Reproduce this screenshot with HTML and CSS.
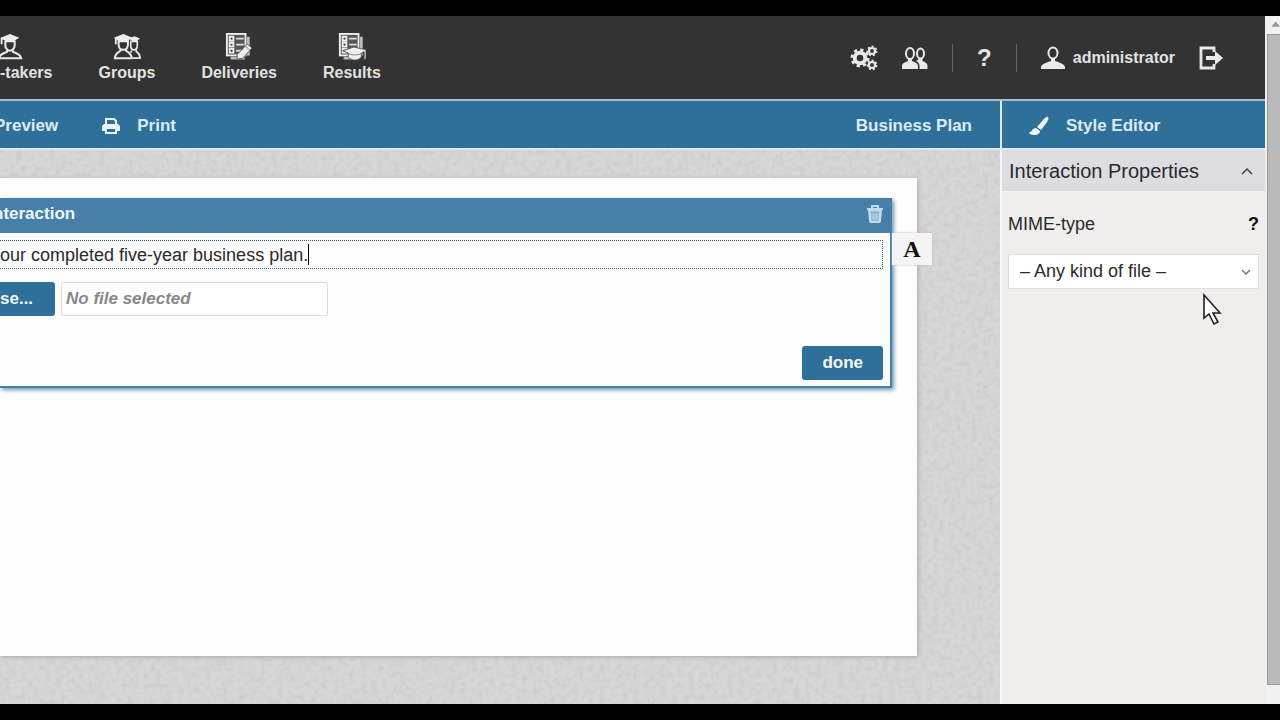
FILE: index.html
```html
<!DOCTYPE html>
<html lang="en">
<head>
<meta charset="utf-8">
<title>Business Plan</title>
<link rel="stylesheet" href="styles.css">
</head>
<body>
<div class="window">
  <div class="app">
    <header class="header">
      <nav class="nav">
        <a class="nav-item nav-item-edge" href="#">
          <svg class="nav-icon" viewBox="0 0 30 30"><use href="#graduate"/></svg>
          <span>-takers</span>
        </a>
        <a class="nav-item" href="#">
          <svg class="nav-icon" viewBox="0 0 30 30"><g fill="none" stroke="#e8e8e8" stroke-width="1.800"><path d="M19 8v5c0 3 1.500 5 3.500 5s3.500-2 3.500-5V8"/><path d="M20 19l-1 2M25 18v2c2 1.500 4 2 4 7h-8"/></g><path d="M17 6l6-2.500L29 6l-3 2v2h-6V8z" fill="#eee"/><g fill="none" stroke="#e8e8e8" stroke-width="2.200"><path d="M6 7v5c0 3.500 2 6 5 6s5-2.500 5-6V7M8 17v2c-3 2-6 3-6 8h18c0-5-3-6-6-8v-2"/></g><path d="M1 5l10-4 10 4-5 3v2H6V8l-2-1v5H2V6z" fill="#eee"/></svg>
          <span>Groups</span>
        </a>
        <a class="nav-item" href="#">
          <svg class="nav-icon" viewBox="0 0 30 30"><use href="#checklist"/><path d="M13 23L24 12l5 4-10 11-6 1z" fill="#eee" stroke="#555" stroke-width="1"/><path d="M22 14l4 4" stroke="#777"/></svg>
          <span>Deliveries</span>
        </a>
        <a class="nav-item" href="#">
          <svg class="nav-icon" viewBox="0 0 30 30"><use href="#checklist"/><path d="M5 19l12-4 13 3v10h-2v-8l-3 1.500V26c-4 4-10 4-14 0v-4.500z" fill="#eee" stroke="#555" stroke-width="1"/><path d="M11 22c4 2 10 2 14 0" fill="none" stroke="#777"/></svg>
          <span>Results</span>
        </a>
      </nav>
      <div class="tools">
        <a class="tool" href="#" aria-label="Settings"><svg width="28" height="26" viewBox="0 0 28 26" fill="none" stroke="#e8e8e8"><circle cx="10" cy="13" r="5.300" stroke-width="4"/><circle cx="10" cy="13" r="8.200" stroke-width="2.600" stroke-dasharray="3.220 3.220"/><circle cx="22" cy="6" r="3" stroke-width="2.200"/><circle cx="22" cy="6" r="4.600" stroke-width="1.600" stroke-dasharray="2.065 2.065"/><circle cx="22" cy="20" r="3" stroke-width="2.200"/><circle cx="22" cy="20" r="4.600" stroke-width="1.600" stroke-dasharray="2.065 2.065"/></svg></a>
        <a class="tool" href="#" aria-label="Users"><svg width="26" height="24" viewBox="0 0 26 24"><g fill="none" stroke="#e8e8e8" stroke-width="2"><ellipse cx="8" cy="7.500" rx="4" ry="5.500"/><ellipse cx="18.500" cy="7.500" rx="3.500" ry="5"/></g><path d="M6 12h4v3c3 1.500 6 2 6 5v3H0v-3c0-3 3-3.500 6-5zM16.500 12h4v3c3 1.500 5 2 5 5v3h-8v-3c0-3-2-4-3.500-5 1.500-.5 2.500-1 2.500-3z" fill="#eaeaea"/></svg></a>
        <span class="rule"></span>
        <a class="tool help" href="#">?</a>
        <span class="rule"></span>
        <a class="tool account" href="#"><svg width="24" height="24" viewBox="0 0 24 24"><ellipse cx="12" cy="7" rx="4.500" ry="5.500" fill="none" stroke="#e8e8e8" stroke-width="2"/><path d="M10 12h4v3c4 1.500 9 2.500 10 6v2H0v-2c1-3.500 6-4.500 10-6z" fill="#eaeaea"/></svg><span>administrator</span></a>
        <a class="tool" href="#" aria-label="Log out"><svg width="24" height="24" viewBox="0 0 24 24"><path d="M15 6V2H2v20h13v-4" fill="none" stroke="#e8e8e8" stroke-width="2.800"/><path d="M7 10h9V5l8 7-8 7v-5H7z" fill="#eaeaea"/></svg></a>
      </div>
    </header>
    <div class="actions">
      <div class="actions-main">
        <button class="action preview" type="button">Preview</button>
        <button class="action print" type="button"><svg width="18" height="16" viewBox="0 0 18 16"><path d="M4 7V1h8l2 2v4" fill="none" stroke="#e9f4fa" stroke-width="2"/><path d="M2 6h14l2 2v5h-3v3H3v-3H0V8z" fill="#e9f4fa"/><path d="M5 11h8v3H5z" fill="#2e7099"/></svg>Print</button>
        <span class="item-name">Business Plan</span>
      </div>
      <button class="action style-editor" type="button"><svg width="20" height="20" viewBox="0 0 20 20" fill="#edf7fc"><path d="M19 1c1 1 0 3-1 5l-6 8-4-3 6-7c2-2 4-4 5-3zM7 12l4 3c0 4-6 5-10 3-1 0-1-1 0-2 2 0 2-4 6-4z"/></svg>Style Editor</button>
    </div>
    <div class="workspace">
      <main class="canvas">
        <svg class="grain" width="100%" height="100%" aria-hidden="true"><filter id="paper"><feTurbulence type="fractalNoise" baseFrequency="0.18" numOctaves="3" seed="4"/><feColorMatrix type="matrix" values="0 0 0 0 0.45  0 0 0 0 0.45  0 0 0 0 0.45  0.6 0 0 0 -0.24"/></filter><rect width="100%" height="100%" filter="url(#paper)"/></svg>
        <section class="sheet">
          <article class="interaction">
            <header class="interaction-head">
              <h2 class="interaction-title">nteraction</h2>
              <button class="trash" type="button" aria-label="Delete"><svg width="16" height="18" viewBox="0 0 16 18"><path d="M5 3V1h6v2M0 4h16" fill="none" stroke="#bfdbe9" stroke-width="2"/><path d="M1 5h14l-1 11q0 2-2 2H4q-2 0-2-2z" fill="#bfdbe9"/><path d="M4 7h8v1H4zM5 9v5M8 9v5M11 9v5M4 15h8" fill="none" stroke="#76a2bf"/></svg></button>
            </header>
            <div class="interaction-body">
              <p class="prompt">our completed five-year business plan.<span class="caret"></span></p>
              <div class="upload">
                <button class="button browse" type="button">se...</button>
                <input class="file-name" type="text" value="No file selected" aria-label="Selected file" readonly>
              </div>
              <div class="finish"><button class="button" type="button">done</button></div>
            </div>
            <button class="text-tool" type="button">A</button>
          </article>
        </section>
      </main>
      <aside class="sidebar">
        <h2 class="panel-title">Interaction Properties<svg width="12" height="8" viewBox="0 0 12 8" fill="none" stroke="#444" stroke-width="1.500"><path d="M1 7l5-5 5 5"/></svg></h2>
        <div class="panel">
          <div class="field-head"><label for="mime">MIME-type</label><button class="hint" type="button">?</button></div>
          <div class="select-wrap">
            <select class="select" id="mime"><option>– Any kind of file –</option></select>
            <svg class="chevron" width="10" height="6" viewBox="0 0 10 6" fill="none" stroke="#777" stroke-width="1.500"><path d="M1 1l4 4 4-4"/></svg>
          </div>
        </div>
      </aside>
    </div>
  </div>
  <div class="scrollbar"><svg class="scroll-up" width="15" height="18" viewBox="0 0 15 18"><path d="M5 11l5-6 5 6z" fill="#999"/></svg><div class="thumb"></div></div>
</div>
<svg class="pointer" width="20" height="34" viewBox="0 0 20 34"><path d="M2 2v23l5-4 5 10 4-2-5-9h7z" fill="#fff" stroke="#222" stroke-width="1.600"/></svg>
<svg class="defs" width="0" height="0" aria-hidden="true">
  <symbol id="graduate" viewBox="0 0 30 30"><g fill="none" stroke="#e8e8e8" stroke-width="2.200"><path d="M10 8v5c0 3 2 6 5 6s5-3 5-6V8M12 18v2c-3 2-8 2-9 7h24c-1-5-6-5-9-7v-2"/></g><path d="M5 5l10-4 10 4-5 3v2H10V8L7 7v5H5z" fill="#eee"/></symbol>
  <symbol id="checklist" viewBox="0 0 30 30"><path d="M6 27h15M25 4v20" fill="none" stroke="#bbb" stroke-width="3"/><rect x="2" y="1" width="20" height="23" fill="#555" stroke="#eee" stroke-width="2"/><g fill="#333" stroke="#eee" stroke-width="2"><path d="M5 4h4v4H5zM5 10.500h4v4H5zM5 17h4v4H5z"/></g><path d="M12 6h8M12 12.500h8M12 19h8" stroke="#ddd" stroke-width="2"/></symbol>
</svg>
</body>
</html>
```
FILE: styles.css
```css
* { box-sizing: border-box; }
body {
  margin: 0;
  min-height: 100vh;
  padding: 16px 0;
  display: flex;
  background: #000;
  overflow: hidden;
  font: 18px/24px "Liberation Sans", Arial, sans-serif;
  color: #2a2a2a;
}
button, input, select { font: inherit; color: inherit; }
button { border: 0; padding: 0; background: none; }
a { color: inherit; text-decoration: none; }
h2, p { margin: 0; }
svg { flex: none; }
.defs { position: absolute; }

.window { flex: 1; display: flex; }
.app { flex: 1; min-width: 0; display: flex; flex-direction: column; }

.header {
  height: 85px;
  display: flex;
  justify-content: space-between;
  background: #333;
  border-bottom: 2px solid #a5bfcd;
  color: #e2e2e2;
  font-size: 16px;
  font-weight: bold;
}
.nav { display: flex; gap: 46px; padding-top: 17px; }
.nav-item { display: flex; flex-direction: column; align-items: center; gap: 2px; line-height: 20px; }
.nav-item-edge { align-items: flex-start; }
.nav-icon { width: 28px; height: 28px; }
.nav-item-edge .nav-icon { margin-left: -4px; }
.tools { display: flex; align-items: center; gap: 24px; padding-right: 42px; }
.tool { display: flex; align-items: center; }
.account { gap: 8px; }
.help { font-size: 24px; }
.rule { width: 1px; height: 28px; background: #666; }

.actions {
  height: 49px;
  display: flex;
  background: #2e7099;
  border-bottom: 2px solid #dceaf2;
  color: #dcebf4;
  font-size: 17px;
  font-weight: bold;
}
.actions-main { flex: 1; display: flex; align-items: center; padding: 2px 28px 0 0; }
.action { display: flex; align-items: center; }
.preview { margin-left: -6px; }
.print { margin-left: 44px; gap: 17px; }
.item-name { margin-left: auto; }
.style-editor { width: 265px; padding: 2px 0 0 27px; gap: 17px; border-left: 2px solid #dceaf2; }

.workspace { flex: 1; display: flex; }
.canvas {
  flex: 1;
  position: relative;
  padding: 28px 83px 48px 0;
  display: flex;
  background: #d6d6d6;
}
.grain { position: absolute; inset: 0; }
.sheet {
  flex: 1;
  position: relative;
  padding: 20px 25px 0 0;
  background: #fdfdfe;
  box-shadow: 1px 1px 4px #aaa;
}
.interaction {
  position: relative;
  border-right: 2px solid #467fa7;
  border-bottom: 2px solid #467fa7;
  box-shadow: 2px 2px 4px #6e99b5;
}
.interaction-head {
  height: 35px;
  display: flex;
  align-items: center;
  justify-content: space-between;
  padding: 0 7px 4px 0;
  background: #467fa7;
  color: #eef6fb;
}
.interaction-title { font-size: 17px; margin-left: -7px; }
.trash { display: flex; }
.interaction-body { padding: 7px 7px 6px 0; }
.prompt {
  height: 29px;
  display: flex;
  align-items: center;
  border: 1px dotted #2c5d80;
  border-left: 0;
}
.caret { width: 1px; height: 21px; background: #000; }
.upload { display: flex; gap: 6px; margin: 13px 0 30px; }
.button {
  height: 34px;
  padding: 0 20px;
  border-radius: 3px;
  background: #2e7099;
  color: #f4fafd;
  font-size: 17px;
  font-weight: bold;
}
.browse { width: 55px; padding: 0; text-align: left; border-radius: 0 3px 3px 0; }
.file-name {
  width: 267px;
  height: 34px;
  padding: 0 4px;
  border: 1px solid #ddd;
  border-radius: 2px;
  background: #fff;
  color: #888;
  font-size: 17px;
  font-style: italic;
  font-weight: bold;
}
.finish { display: flex; justify-content: flex-end; }
.text-tool {
  position: absolute;
  left: 100%;
  top: 35px;
  width: 40px;
  height: 32px;
  margin-left: 2px;
  background: #f5f3f4;
  box-shadow: 0 0 2px #bbb;
  color: #111;
  font: bold 24px/30px "Liberation Serif", "Times New Roman", serif;
}

.sidebar { width: 265px; background: #efeeed; border-left: 2px solid #f7f7f9; }
.panel-title {
  height: 41px;
  display: flex;
  align-items: center;
  justify-content: space-between;
  padding: 0 12px 0 7px;
  background: #dddde1;
  font-size: 20px;
  font-weight: normal;
}
.panel { padding: 21px 6px 0; }
.field-head { display: flex; align-items: center; justify-content: space-between; margin-bottom: 18px; }
.hint { color: #111; font-weight: bold; }
.select-wrap { position: relative; }
.select {
  appearance: none;
  width: 100%;
  height: 35px;
  padding: 0 11px 2px;
  border: 1px solid #ddd;
  border-radius: 0;
  background: #fff;
}
.chevron { position: absolute; right: 8px; top: 15px; }

.scrollbar { width: 15px; display: flex; flex-direction: column; background: #f1f1f1; padding: 0 0 19px 2px; }
.scroll-up { width: 13px; }
.thumb { flex: 1; background: #bababa; border: 1px solid #999; border-right: 0; }
.pointer { position: absolute; left: 1202px; top: 293px; }
```
